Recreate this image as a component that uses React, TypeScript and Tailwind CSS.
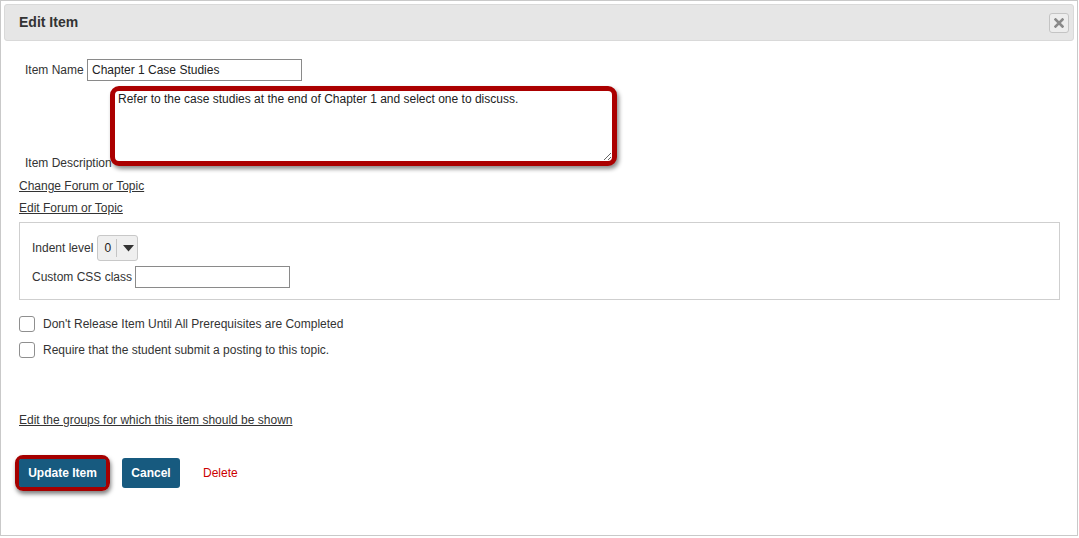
import React from 'react';

const CloseIcon: React.FC = () => (
  <svg width="10" height="10" viewBox="0 0 10 10" aria-hidden="true">
    <path d="M1.5 1.5 L8.5 8.5 M8.5 1.5 L1.5 8.5" stroke="#8a8a8a" strokeWidth="2.6" strokeLinecap="square" />
  </svg>
);

const Checkbox: React.FC<{ label: string }> = ({ label }) => (
  <label className="flex items-center gap-[8px] h-[16px]">
    <span className="w-[16px] h-[16px] rounded-[3px] border border-[#8f8f8f] bg-white shrink-0" />
    <span className="text-[12px] text-[#333]">{label}</span>
  </label>
);

export default function App() {
  return (
    <div className="w-[1079px] h-[538px] bg-white font-['Liberation_Sans',Arial,sans-serif] text-[#333] overflow-hidden">
      <div className="w-[1078px] h-[536px] border border-[#c9c9c9] p-[3px]">
        {/* header */}
        <div className="h-[37px] bg-[#e6e6e6] border border-[#d9d9d9] rounded-[3px] flex items-center justify-between pl-[14px] pr-[4px]">
          <h1 className="text-[14px] font-bold text-[#333]">Edit Item</h1>
          <button className="w-[20px] h-[20px] rounded-[3px] border border-[#c4c4c4] bg-[#ededed] flex items-center justify-center">
            <CloseIcon />
          </button>
        </div>

        <div className="pl-[15px] pr-[15px]">
          {/* item name */}
          <div className="flex items-center mt-[18px] pl-[6px]">
            <span className="text-[12px] w-[62px]">Item Name</span>
            <input
              readOnly
              value="Chapter 1 Case Studies"
              className="w-[215px] h-[22px] border border-[#8a8a8a] px-[4px] text-[12px] text-[#222] outline-none"
            />
          </div>

          {/* description */}
          <div className="flex items-end mt-[5px] pl-[6px]">
            <span className="text-[12px] w-[85px] shrink-0 whitespace-nowrap mb-[-6px]">Item Description</span>
            <div className="w-[507px] h-[80px] border-[5px] border-[#ab0000] rounded-[9px] shadow-[2px_3px_4px_rgba(0,0,0,0.45)] bg-white relative z-10 overflow-hidden">
              <textarea
                readOnly
                value="Refer to the case studies at the end of Chapter 1 and select one to discuss."
                className="w-full h-full resize-y px-[3px] py-[1px] text-[12px] text-[#222] outline-none border-0 leading-[14px]"
              />
            </div>
          </div>

          {/* links */}
          <div className="mt-[9px] flex flex-col text-[12px] leading-[22px]">
            <a className="underline text-[#333] w-fit">Change Forum or Topic</a>
            <a className="underline text-[#333] w-fit">Edit Forum or Topic</a>
          </div>

          {/* options fieldset */}
          <div className="mt-[3px] w-[1041px] h-[78px] border border-[#cfcfcf] pt-[12px] pl-[12px] flex flex-col gap-[5px]">
            <div className="flex items-center gap-[4px] text-[12px]">
              <span>Indent level</span>
              <div className="h-[26px] w-[41px] rounded-[3px] border border-[#c8c8c8] bg-[#efefef] flex items-center">
                <span className="pl-[6px] pr-[5px] text-[12px] text-[#222]">0</span>
                <span className="w-px h-[18px] bg-[#c4c4c4]" />
                <svg width="11" height="7" viewBox="0 0 11 7" className="ml-[6px]" aria-hidden="true">
                  <path d="M0 0 L11 0 L5.5 6.5 Z" fill="#333" />
                </svg>
              </div>
            </div>
            <div className="flex items-center gap-[3px] text-[12px]">
              <span>Custom CSS class</span>
              <input readOnly className="w-[155px] h-[22px] border border-[#8a8a8a] outline-none" />
            </div>
          </div>

          {/* checkboxes */}
          <div className="mt-[16px] flex flex-col gap-[10px]">
            <Checkbox label="Don't Release Item Until All Prerequisites are Completed" />
            <Checkbox label="Require that the student submit a posting to this topic." />
          </div>

          {/* groups link */}
          <a className="block w-fit mt-[53px] text-[12px] underline text-[#333]">
            Edit the groups for which this item should be shown
          </a>

          {/* buttons */}
          <div className="mt-[26px] flex items-center -ml-[4px]">
            <div className="border-[4px] border-[#a50000] rounded-[8px] shadow-[1px_3px_4px_rgba(0,0,0,0.5)]">
              <button className="h-[28px] w-[87px] bg-[#175a7f] text-white text-[12px] font-bold rounded-[2px]">
                Update Item
              </button>
            </div>
            <button className="ml-[12px] h-[30px] w-[58px] bg-[#175a7f] text-white text-[12px] font-bold rounded-[3px]">
              Cancel
            </button>
            <a className="ml-[23px] text-[12px] text-[#cc0000]">Delete</a>
          </div>
        </div>
      </div>
    </div>
  );
}
